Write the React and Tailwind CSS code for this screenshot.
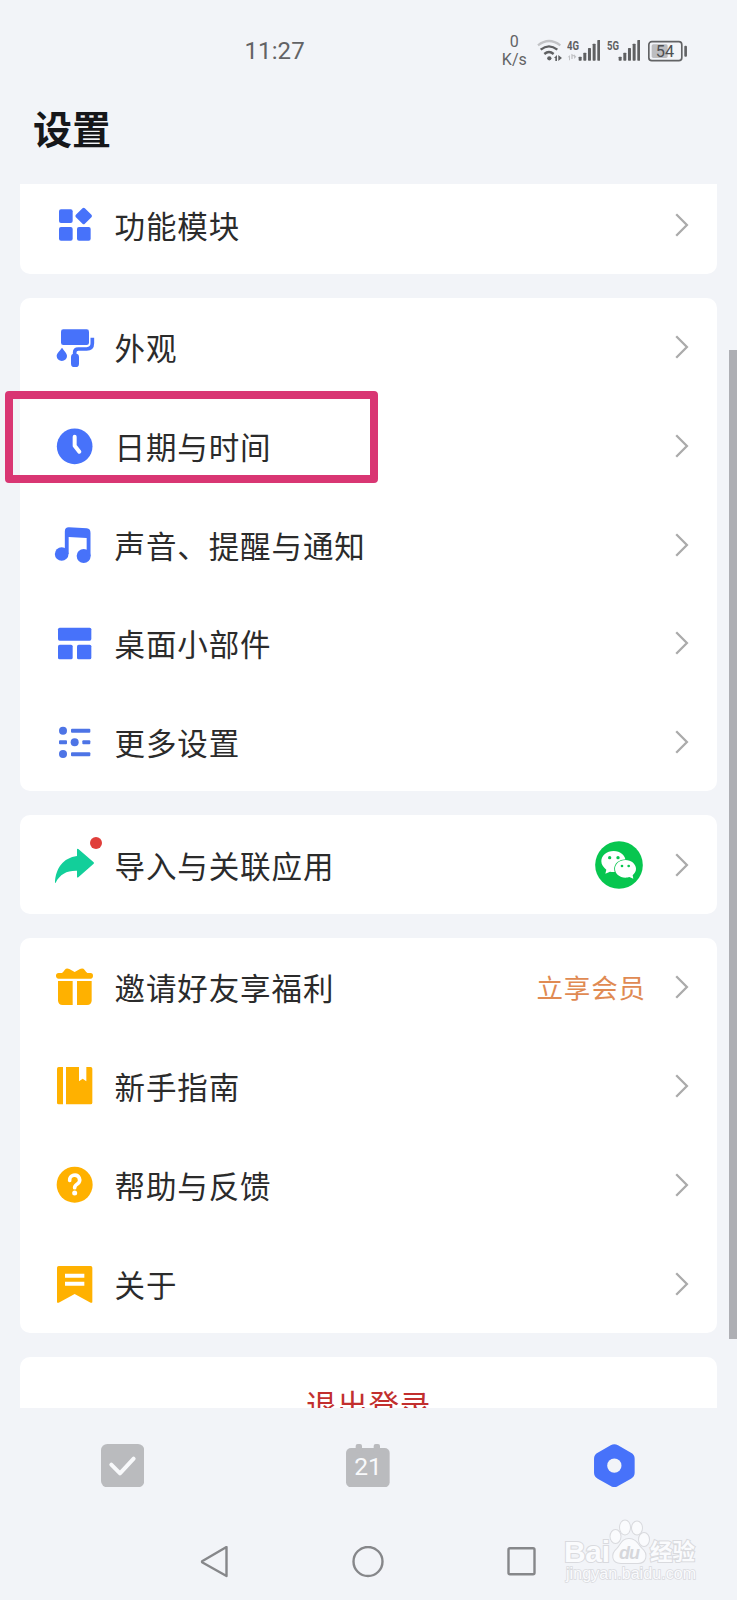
import React from 'react';

const BLUE = '#4772fa';
const AMBER = '#ffb100';

function Icon({ children, fill = BLUE }) {
  return (
    <svg viewBox="0 0 132 132" className="block h-11 w-11 shrink-0" fill={fill}>
      {children}
    </svg>
  );
}

const ModulesIcon = () => (
  <Icon>
    <rect x="21" y="19" width="41" height="41" rx="6" />
    <rect x="21" y="72" width="41" height="41" rx="6" />
    <rect x="75" y="72" width="41" height="41" rx="6" />
    <rect x="76" y="20" width="38" height="38" rx="5" transform="rotate(45 95 39)" />
  </Icon>
);

const RollerIcon = () => (
  <Icon>
    <rect x="27" y="13" width="84" height="47" rx="7" />
    <path d="M121 38v17q0 17-17 17H79q-11 0-11 10v12" fill="none" stroke={BLUE} strokeWidth="11" />
    <rect x="57" y="86" width="24" height="40" rx="10" />
    <path d="M30 68C36 77 45 84 45 93a15.500 15 0 0 1-31 0C14 84 24 77 30 68z" />
  </Icon>
);

const ClockIcon = () => (
  <Icon>
    <circle cx="68" cy="67" r="53.500" />
    <path d="M68 38v27l14 18" fill="none" stroke="#fff" strokeWidth="12" strokeLinecap="round" strokeLinejoin="round" />
  </Icon>
);

const MusicIcon = () => (
  <Icon>
    <circle cx="29" cy="93" r="20.500" />
    <circle cx="95" cy="99" r="21" />
    <path d="M38.500 93V25q0-12 12-12l54 3q11 1 11 14v69h-11.500V45L50 42v51z" />
  </Icon>
);

const WidgetIcon = () => (
  <Icon>
    <rect x="18" y="20" width="100" height="39" rx="5" />
    <rect x="18" y="71" width="44" height="44" rx="5" />
    <rect x="75" y="71" width="43" height="44" rx="5" />
  </Icon>
);

const MoreIcon = () => (
  <Icon fill="#4d74e6">
    <circle cx="33" cy="32" r="12" />
    <rect x="57" y="26" width="58" height="12" rx="3" />
    <rect x="21" y="61" width="24" height="12" rx="3" />
    <circle cx="68" cy="67" r="12" />
    <rect x="91" y="61" width="24" height="12" rx="3" />
    <circle cx="33" cy="102" r="12" />
    <rect x="57" y="97" width="58" height="12" rx="3" />
  </Icon>
);

const ShareIcon = () => (
  <Icon fill="#12cf9a">
    <path d="M9 120C10 77 34 44 75 39V19q1-3 4-1l46 40q2 2 0 4l-46 41q-3 2-4-1V83C45 82 24 93 11 119z" />
  </Icon>
);

const GiftIcon = () => (
  <Icon fill={AMBER}>
    <path d="M20 24h10q4-3 8-9 5-7 14-3l16 9 16-9q9-4 14 3 4 6 8 9h10q7 0 7 8.500t-7 8.500H20q-8 0-8-8.500t8-8.500z" />
    <path d="M18 48h44v72H32q-14 0-14-14z" />
    <path d="M75 48h44v58q0 14-14 14H75z" />
  </Icon>
);

const BookIcon = () => (
  <Icon fill={AMBER}>
    <path d="M20 9h13v112H20q-5 0-5-5V14q0-5 5-5z" />
    <path d="M42 9h39v43l11-8 11 8V9h13q5 0 5 5v102q0 5-5 5H42z" />
  </Icon>
);

const HelpIcon = () => (
  <Icon fill={AMBER}>
    <circle cx="68" cy="65" r="54" />
    <path d="M53 52a15 14.500 0 1 1 23 11q-8 5-8 11" fill="none" stroke="#fff" strokeWidth="11" strokeLinecap="round" />
    <circle cx="68" cy="90" r="7.500" fill="#fff" />
  </Icon>
);

const AboutIcon = () => (
  <Icon fill={AMBER}>
    <path d="M20 12h96q5 0 5 5v102q0 5-5 3L68 96l-48 26q-5 2-5-3V17q0-5 5-5z" />
    <path d="M39 35h58v12H39zM39 59h58v12H39z" fill="#fff" />
  </Icon>
);

const WechatIcon = () => (
  <svg viewBox="0 0 144 144" className="h-12 w-12">
    <circle cx="72" cy="72" r="71.500" fill="#07c64f" />
    <path d="M56 30c20 0 36 13 36 31S76 93 56 93c-4 0-8 0-11-1L31 98l3-12C25 79 19 71 19 61c0-18 16-31 37-31z" fill="#fff" />
    <ellipse cx="91.500" cy="83.500" rx="34" ry="29" fill="#07c64f" />
    <path d="M91.500 57c17 0 31.500 12 31.500 26.500 0 8-4 14-10 19.500l2 10-12-5c-4 1-7 2-11.500 2C73 110 60 98 60 83.500S73 57 91.500 57z" fill="#fff" />
    <g fill="#07c64f">
      <circle cx="44" cy="50" r="5" />
      <circle cx="69" cy="50" r="5" />
      <circle cx="81" cy="75" r="4" />
      <circle cx="101" cy="75" r="4" />
    </g>
  </svg>
);

const Chevron = () => (
  <svg viewBox="0 0 14 24" className="h-6 w-3.5" fill="none" stroke="#ababab" strokeWidth="2.3">
    <path d="M1.200 1.300 11.900 12 1.200 22.700" />
  </svg>
);

function Row({ icon, label, dot, children }) {
  return (
    <div className="relative flex h-[98.7px] items-center pr-7 pl-8">
      {icon}
      {dot && <span className="absolute top-[21.500px] left-[70px] h-3 w-3 rounded-full bg-[#e03e3a]" />}
      <span className="ml-[18.500px] text-[30.500px] leading-[30px] tracking-[0.9px] text-[#2b2b2b]">{label}</span>
      <div className="ml-auto flex items-center">
        {children}
        <Chevron />
      </div>
    </div>
  );
}

function Card({ children }) {
  return <section className="shrink-0 rounded-[10px] bg-white">{children}</section>;
}

function Signal({ label, arrows }) {
  return (
    <svg viewBox="0 0 100 72" className="h-6 w-[33.300px]" fill="#5f6062">
      <text x="0" y="32" fontSize="36" fontWeight="700" textLength="36" lengthAdjust="spacingAndGlyphs">{label}</text>
      {arrows && <path d="M9 64V48l-7 7h4v9zM13 44v16h4v-8h9zM21 46v14l7-7z" fill="#c2c3c6" />}
      <rect x="35" y="53" width="9" height="12" rx="2" />
      <rect x="49" y="41" width="9" height="24" rx="2" />
      <rect x="63" y="27" width="9" height="38" rx="2" />
      <rect x="77" y="14" width="9" height="51" rx="2" />
      <rect x="91" y="3" width="9" height="62" rx="2" />
    </svg>
  );
}

function StatusBar() {
  return (
    <div className="flex h-[101px] items-center pr-[50px] pl-[244.500px] font-['Roboto','Noto_Sans_CJK_SC',sans-serif] text-[#626365]">
      <span className="text-[24px] leading-none tracking-[0.1px]">11:27</span>
      <div className="ml-auto flex items-center">
        <div className="mr-[10px] flex flex-col items-center text-[16px] leading-[18px]">
          <span>0</span>
          <span>K/s</span>
        </div>
        <svg viewBox="0 0 76 72" className="mr-[4.700px] h-6 w-[25.300px]" fill="none" stroke="#5f6062" strokeWidth="7">
          <path d="M3 19Q36-7 70 19" stroke="#c2c3c6" />
          <path d="M11 32Q36 12 61 32" />
          <path d="M22 45Q36 33 50 45" />
          <circle cx="37" cy="58" r="6.500" fill="#5f6062" stroke="none" />
          <path d="M60 66V48l-9 9h4v9zM64 48v18l11-9z" fill="#5f6062" stroke="none" />
        </svg>
        <Signal label="4G" arrows />
        <div className="w-[6.700px]" />
        <Signal label="5G" />
        <svg viewBox="0 0 118 72" className="ml-[7.700px] h-6 w-[39.300px]">
          <rect x="11" y="16" width="48" height="41" rx="5" fill="#bcbdc0" />
          <rect x="2.500" y="8" width="99" height="57" rx="9" fill="none" stroke="#626365" strokeWidth="5" />
          <rect x="109" y="20" width="8" height="33" rx="3" fill="#626365" />
          <text x="51" y="54" fontSize="49" textAnchor="middle" fill="#4f5052">54</text>
        </svg>
      </div>
    </div>
  );
}

function TabBar() {
  return (
    <nav className="grid h-[114px] grid-cols-3 place-items-center pt-px">
      <svg viewBox="0 0 130 130" className="h-[43.300px] w-[43.300px]">
        <rect width="130" height="130" rx="19" fill="#babbbe" />
        <path d="M31 62l26 26 41-44" fill="none" stroke="#f8f9fb" strokeWidth="12" strokeLinecap="round" strokeLinejoin="round" />
      </svg>
      <svg viewBox="0 0 131 130" className="mr-px h-[43.300px] w-[43.700px]">
        <rect y="12" width="131" height="118" rx="15" fill="#babbbe" />
        <rect x="29" y="0" width="19" height="26" rx="6" fill="#babbbe" />
        <rect x="83" y="0" width="19" height="26" rx="6" fill="#babbbe" />
        <text x="66" y="92" textAnchor="middle" fontFamily="Roboto, sans-serif" fontSize="74" fill="#f8f9fb">21</text>
      </svg>
      <svg viewBox="0 0 122 130" className="h-[43.300px] w-[40.700px]">
        <path d="M50 4q11-7 22 0l39 22q11 6 11 18v42q0 12-11 18l-39 22q-11 7-22 0L11 104Q0 98 0 86V44q0-12 11-18z" fill={BLUE} />
        <circle cx="61" cy="65" r="21.500" fill="#f2f4f8" />
      </svg>
    </nav>
  );
}

function SystemNav() {
  return (
    <div className="flex h-[78px] items-center justify-center gap-[121.500px] pt-0.5 pr-px">
      <svg viewBox="0 0 32 32" className="h-8 w-8" fill="none" stroke="#86878a" strokeWidth="2.4" strokeLinejoin="round">
        <path d="M3.500 15 27.500 1v29L3.500 16.500q-1-.7 0-1.500z" />
      </svg>
      <svg viewBox="0 0 32 32" className="h-8 w-8" fill="none" stroke="#86878a" strokeWidth="2.4">
        <circle cx="16" cy="15.500" r="14.500" />
      </svg>
      <svg viewBox="0 0 32 32" className="h-8 w-8" fill="none" stroke="#86878a" strokeWidth="2.4">
        <rect x="2.500" y="2.200" width="26" height="26" rx="1.500" />
      </svg>
    </div>
  );
}

function Watermark() {
  return (
    <svg viewBox="0 0 140 70" className="absolute top-[1516px] left-[561px] h-[70px] w-[140px]" fill="#fafbfd" stroke="#d9dade" strokeWidth="2" paintOrder="stroke">
      <ellipse cx="54.500" cy="20.500" rx="5" ry="6.500" />
      <ellipse cx="64" cy="11.500" rx="5" ry="7" />
      <ellipse cx="76" cy="12" rx="5" ry="6.500" />
      <ellipse cx="83" cy="23.500" rx="5" ry="6.500" />
      <path d="M68 23c7 0 9 6 13 10 6 5 4 14-4 14H60c-9 0-10-9-4-14 4-4 5-10 12-10z" />
      <text x="3" y="45.500" fontFamily="Liberation Sans, sans-serif" fontWeight="700" fontSize="30" textLength="46">Bai</text>
      <text x="58" y="43" fontFamily="Liberation Sans, sans-serif" fontWeight="700" fontStyle="italic" fontSize="18" fill="#d6d7db" stroke="none" textLength="21">du</text>
      <text x="89" y="44" fontFamily="Noto Sans CJK SC, sans-serif" fontWeight="700" fontSize="22.500">经验</text>
      <text x="5" y="63" fontFamily="Liberation Sans, sans-serif" fontSize="16" strokeWidth="1.5" textLength="130">jingyan.baidu.com</text>
    </svg>
  );
}

export default function App() {
  return (
    <div className="relative flex h-[1600px] w-[737px] flex-col overflow-hidden bg-[#f2f4f8] font-['Noto_Sans_CJK_SC',sans-serif]">
      <StatusBar />
      <header className="h-[83px] pt-[7px] pl-[33px]">
        <h1 className="text-[39px] leading-[38px] font-bold text-[#16171a]">设置</h1>
      </header>

      <main className="flex h-[1224px] flex-col overflow-hidden px-5">
        <div className="-mt-[8.700px] flex shrink-0 flex-col gap-6">
          <Card>
            <Row icon={<ModulesIcon />} label="功能模块" />
          </Card>
          <Card>
            <Row icon={<RollerIcon />} label="外观" />
            <Row icon={<ClockIcon />} label="日期与时间" />
            <Row icon={<MusicIcon />} label="声音、提醒与通知" />
            <Row icon={<WidgetIcon />} label="桌面小部件" />
            <Row icon={<MoreIcon />} label="更多设置" />
          </Card>
          <Card>
            <Row icon={<ShareIcon />} label="导入与关联应用" dot>
              <div className="mr-8">
                <WechatIcon />
              </div>
            </Row>
          </Card>
          <Card>
            <Row icon={<GiftIcon />} label="邀请好友享福利">
              <span className="mr-[29px] pb-px text-[26.500px] leading-none tracking-[0.9px] text-[#e08a52]">立享会员</span>
            </Row>
            <Row icon={<BookIcon />} label="新手指南" />
            <Row icon={<HelpIcon />} label="帮助与反馈" />
            <Row icon={<AboutIcon />} label="关于" />
          </Card>
          <Card>
            <div className="flex h-[98.7px] items-center justify-center pb-[3px] text-[30.500px] leading-none tracking-[0.8px] text-[#c22f2e]">
              退出登录
            </div>
          </Card>
        </div>
      </main>

      <TabBar />
      <SystemNav />

      {/* scroll indicator */}
      <div className="absolute top-[350px] right-0 h-[989px] w-2 bg-[#aeafb4]" />
      {/* highlighted entry */}
      <div className="absolute top-[391px] left-[5px] h-[92px] w-[373px] rounded-[4px] border-[8px] border-[#d93673]" />
      <Watermark />
    </div>
  );
}
